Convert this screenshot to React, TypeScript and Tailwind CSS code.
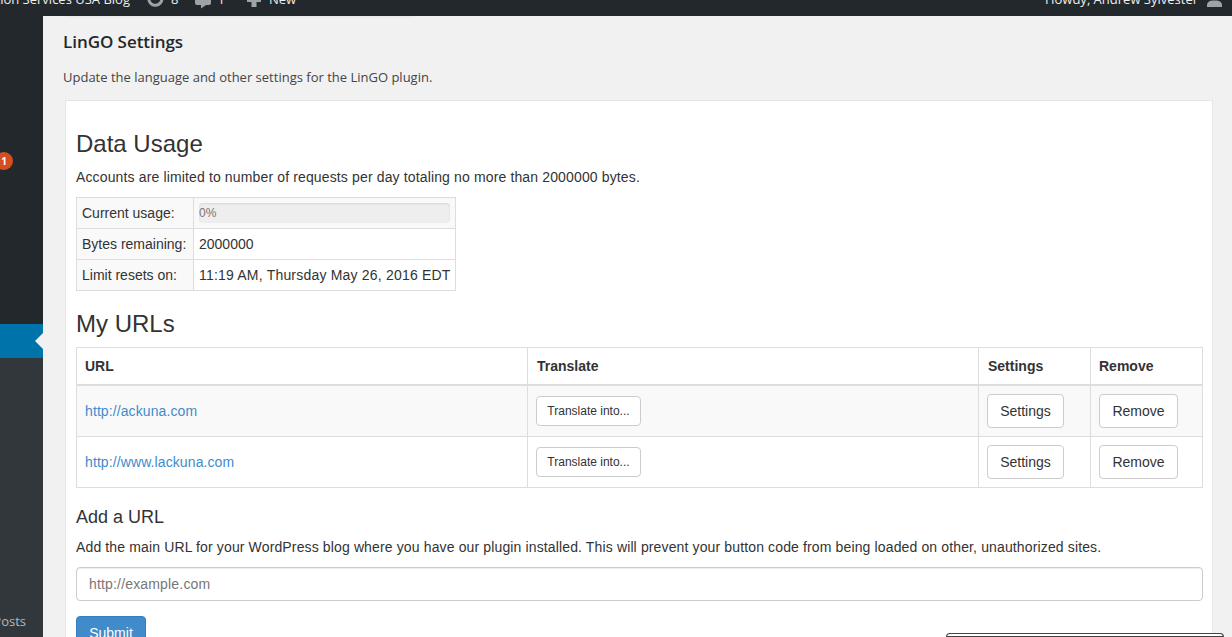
import React from 'react';

const sans = 'font-["Liberation_Sans",Arial,sans-serif]';

function TopBar() {
  return (
    <div className='h-4 overflow-hidden bg-[#23282d] font-["Open_Sans",sans-serif] text-[13px] text-[#eeeeee]'>
      {/* admin bar is 32px tall, the screenshot starts halfway down it */}
      <div className="-mt-4 flex h-8 items-center justify-between pr-[10px]">
        <div className="flex items-center">
          <div className="flex w-[130px] justify-end overflow-hidden whitespace-nowrap">
            Translation Services USA Blog
          </div>
          <svg className="ml-4 h-5 w-5 text-[#9ea3a8]" viewBox="0 0 20 20" fill="none" stroke="currentColor" strokeWidth="3">
            <path d="M3 7.5a6.5 6.5 0 1 0 2 -3.5" />
          </svg>
          <span className="ml-[5px]">8</span>
          <svg className="ml-[17px] h-5 w-[16px] text-[#9ea3a8]" viewBox="0 0 16 20" fill="currentColor">
            <path d="M2 2h12a2 2 0 0 1 2 2v9a2 2 0 0 1-2 2H11l-5 3.5V15H2a2 2 0 0 1-2-2V4a2 2 0 0 1 2-2z" />
          </svg>
          <span className="ml-[6px]">1</span>
          <svg className="ml-[22px] h-5 w-[14px] text-[#9ea3a8]" viewBox="0 0 14 20" fill="currentColor">
            <path d="M4.5 3h5v5H14v4H9.5v5h-5v-5H0V8h4.500z" />
          </svg>
          <span className="ml-[8px]">New</span>
        </div>
        <div className="flex items-center">
          <span>Howdy, Andrew Sylvester</span>
          <svg className="ml-[9px] h-5 w-[15px] text-[#9ea3a8]" viewBox="0 0 15 20" fill="currentColor">
            <circle cx="7.500" cy="5" r="5" />
            <path d="M0 17v-2c0-2.500 2-4 5-4.500h5c3 .5 5 2 5 4.500v2z" />
          </svg>
        </div>
      </div>
    </div>
  );
}

function Sidebar() {
  return (
    <aside className='flex w-[43px] shrink-0 flex-col bg-[#23282d] font-["Open_Sans",sans-serif]'>
      <div className="h-[308px] shrink-0 overflow-hidden">
        <div className="-ml-[5px] mt-[136px] flex h-[18px] w-[18px] items-center justify-center rounded-full bg-[#d54e21] text-[10px] font-bold text-white">
          1
        </div>
      </div>
      <div className="relative h-[34px] shrink-0 bg-[#0073aa]">
        <div className="absolute right-0 top-[9px] border-y-[8px] border-r-[8px] border-y-transparent border-r-[#f1f1f1]" />
      </div>
      <div className="flex flex-1 flex-col justify-end overflow-hidden bg-[#32373c] pb-[7px]">
        <div className="flex h-[18px] justify-end pr-[17px] text-[13px] leading-[18px] text-[#b4b9be]">
          Posts
        </div>
      </div>
    </aside>
  );
}

function UsageTable() {
  const cell = 'border border-[#dddddd] px-[5px] py-[5px] leading-5';
  const head = cell + ' w-[117px] bg-[#f9f9f9] font-normal text-left';
  return (
    <table className="mb-5 w-[380px] table-fixed border-collapse">
      <tbody>
        <tr className="bg-[#f9f9f9]">
          <th className={head}>Current usage:</th>
          <td className={cell}>
            <div className="h-5 rounded bg-[#eeeeee] text-xs leading-5 text-[#777777] shadow-[inset_0_1px_2px_rgba(0,0,0,0.1)]">
              0%
            </div>
          </td>
        </tr>
        <tr>
          <th className={head}>Bytes remaining:</th>
          <td className={cell}>2000000</td>
        </tr>
        <tr>
          <th className={head}>Limit resets on:</th>
          <td className={cell + ' whitespace-nowrap tracking-[0.2px]'}>11:19 AM, Thursday May 26, 2016 EDT</td>
        </tr>
      </tbody>
    </table>
  );
}

const urls = ['http://ackuna.com', 'http://www.lackuna.com'];

function UrlTable() {
  const th = 'border border-[#dddddd] border-b-2 p-2 text-left font-bold leading-5';
  const td = 'border border-[#dddddd] px-2 py-2 align-middle leading-5';
  const btn = 'rounded border border-[#cccccc] bg-white text-[#333333]';
  return (
    <table className="w-full table-fixed border-collapse">
      <thead>
        <tr className="h-[36px]">
          <th className={th + ' w-[451px]'}>URL</th>
          <th className={th + ' w-[451px] pl-[9px]'}>Translate</th>
          <th className={th + ' w-[112px] pl-[9px]'}>Settings</th>
          <th className={th}>Remove</th>
        </tr>
      </thead>
      <tbody>
        {urls.map((url, i) => (
          <tr key={url} className={i === 0 ? 'h-[51px] bg-[#f9f9f9]' : 'h-[51px]'}>
            <td className={td}>
              <a href="#" className="tracking-[0.1px] text-[#428bca]">{url}</a>
            </td>
            <td className={td}>
              <button className={btn + ' h-[30px] w-[105px] text-xs'}>Translate into...</button>
            </td>
            <td className={td}>
              <button className={btn + ' h-[34px] w-[77px]'}>Settings</button>
            </td>
            <td className={td}>
              <button className={btn + ' h-[34px] w-[79px]'}>Remove</button>
            </td>
          </tr>
        ))}
      </tbody>
    </table>
  );
}

export default function App() {
  return (
    <div className="relative flex h-[637px] flex-col overflow-hidden bg-[#f1f1f1]">
      <TopBar />
      <div className="flex min-h-0 flex-1">
        <Sidebar />
        <main className="min-w-0 flex-1 pl-5 pr-[19px]">
          {/* bottom edge of a notice scrolled under the admin bar */}
          <div className="ml-[2px] h-[2px] w-[350px] rounded-b-sm bg-[#ebebeb]" />
          <h1 className='pt-[14px] font-["Open_Sans",sans-serif] text-[17px] font-semibold leading-5 tracking-[-0.05px] text-[#23282d]'>
            LinGO Settings
          </h1>
          <p className='mt-[15px] font-["Open_Sans",sans-serif] text-[13px] leading-5 text-[#444444]'>
            Update the language and other settings for the LinGO plugin.
          </p>
          <div className={sans + ' mt-[13px] ml-[2px] border border-[#e5e5e5] bg-white pl-[10px] pr-[9px] pt-[30px] text-sm text-[#333333]'}>
            <h3 className="text-2xl font-normal leading-[26px]">Data Usage</h3>
            <p className="mb-[10px] mt-[10px] leading-5 tracking-[0.14px]">
              Accounts are limited to number of requests per day totaling no more than 2000000 bytes.
            </p>
            <UsageTable />
            <h3 className="mb-[10px] text-2xl font-normal leading-[26px]">My URLs</h3>
            <UrlTable />
            <h4 className="mt-[19px] text-lg font-normal leading-5">Add a URL</h4>
            <p className="mt-[10px] leading-5 tracking-[0.135px]">
              Add the main URL for your WordPress blog where you have our plugin installed. This will prevent your button code from being loaded on other, unauthorized sites.
            </p>
            <input
              placeholder="http://example.com"
              className="mt-[10px] block h-[34px] w-full rounded border border-[#cccccc] px-3 text-sm tracking-[0.17px] shadow-[inset_0_1px_1px_rgba(0,0,0,0.075)] placeholder:text-[#777777]"
            />
            <button className="mt-[15px] h-[34px] w-[70px] rounded border border-[#357ebd] bg-[#428bca] text-white">
              Submit
            </button>
          </div>
        </main>
      </div>
      {/* edge of a floating panel poking up from the bottom */}
      <div className="absolute bottom-0 left-[946px] h-[4px] w-[278px] rounded-t-sm border border-[#444444] bg-white" />
    </div>
  );
}
